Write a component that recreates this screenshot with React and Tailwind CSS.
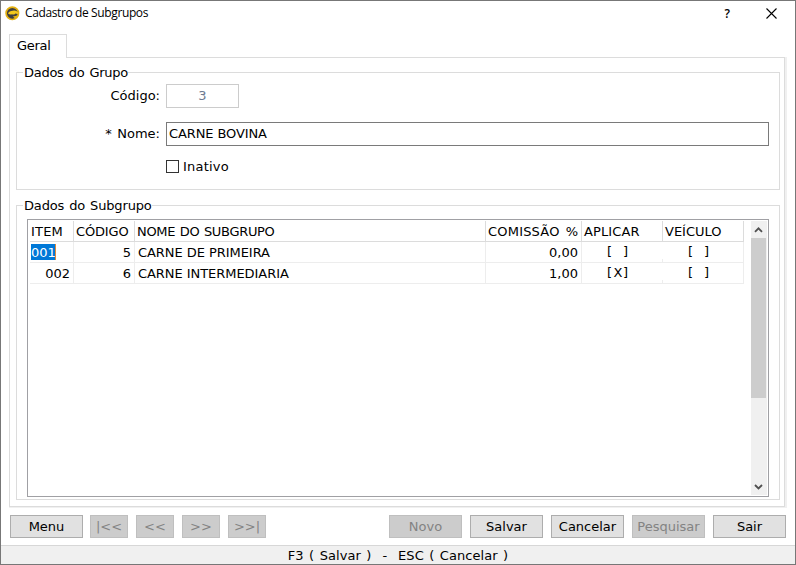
import React from "react";

function AppIcon() {
  return (
    <svg width="15" height="15" viewBox="0 0 15 15" className="shrink-0">
      <circle cx="7.3" cy="7.3" r="6.2" fill="#3f3f40" stroke="#e3b010" strokeWidth="1.7" />
      <path d="M3 7.6C3.8 5.6 6 4.6 8 4.8C10 4 12.4 5 13.6 7L12.6 8.1L10.4 7.4C9.4 8.5 8.2 9 7 8.3C5.6 8.8 4.2 8.5 3 7.6Z" fill="#f3c81c" />
      <path d="M8 10.2C10 10.6 12 9.8 13 8.6L12 11.6C10.6 12.6 9 12 8 10.2Z" fill="#e3b010" />
    </svg>
  );
}

function Group({ title, titleClass, className, children }) {
  return (
    <section className={`border border-[#dcdcdc] ${className}`}>
      <h2 className="-mt-[8px] ml-1.5 flex h-[15px]">
        <span className={`bg-white pl-px leading-4 ${titleClass}`}>{title}</span>
      </h2>
      {children}
    </section>
  );
}

function Button({ children, disabled, narrow }) {
  return (
    <button
      disabled={disabled}
      className={`flex h-[23px] shrink-0 items-center justify-center border ${narrow ? "w-[38px]" : "w-[73px]"} ${
        disabled ? "border-[#bfbfbf] bg-[#cccccc] text-[#838383]" : "border-[#adadad] bg-[#e1e1e1] text-black"
      }`}
    >
      {children}
    </button>
  );
}

const columns = "grid grid-cols-[44px_61px_351px_96px_81px_81px]";

function Row({ item, selected, code, name, commission, apply, vehicle }) {
  const cell = "border-r border-b border-[#ededed] h-[21px] leading-[22px] whitespace-pre";
  return (
    <div className={columns}>
      <div className={`${cell} ${selected ? "pl-px" : "pr-[3px] text-right"}`}>
        {selected ? (
          <span className="mt-[2px] flex h-4 w-[25px] items-center border-r border-[#e08a3a] bg-[#0078d7] pt-px tracking-[-0.05px] text-white">{item}</span>
        ) : (
          item
        )}
      </div>
      <div className={`${cell} pr-[3px] text-right`}>{code}</div>
      <div className={`${cell} pl-[3px] tracking-[-0.05px]`}>{name}</div>
      <div className={`${cell} pr-[3px] text-right`}>{commission}</div>
      <Mark value={apply} />
      <Mark value={vehicle} last />
    </div>
  );
}

function Mark({ value, last }) {
  return (
    <div className={`flex h-[21px] flex-col border-b border-[#ededed] ${last ? "border-r" : ""}`}>
      <div className="flex h-[17px] pl-[25px] leading-[19px]">
        <span className="w-[6px]">[</span>
        <span className="flex w-[10px] justify-center">{value}</span>
        <span>]</span>
      </div>
      {!last && <div className="h-[3px] border-r border-[#ededed]" />}
    </div>
  );
}

function Chevron({ up }) {
  return (
    <svg width="15" height="16" viewBox="0 0 15 16" className="block">
      <path d={up ? "M4 9.8L7.5 6.3L11 9.8" : "M4 6L7.5 9.5L11 6"} fill="none" stroke="#505050" strokeWidth="1.8" />
    </svg>
  );
}

export default function App() {
  return (
    <div className="flex h-[565px] w-[796px] flex-col overflow-hidden border border-[#777777] bg-white font-['DejaVu_Sans',Verdana,sans-serif] text-[13px] text-black">
      <header className="flex h-[33px] shrink-0 items-start pt-[5px] pl-1 font-['Open_Sans','Segoe_UI',sans-serif] text-xs">
        <AppIcon />
        <h1 className="-mt-[1px] ml-[5px] leading-4 tracking-[-0.38px]">Cadastro de Subgrupos</h1>
        <span className="mr-[36px] ml-auto font-semibold leading-[15px]">?</span>
        <svg width="11" height="11" viewBox="0 0 11 11" className="mt-[2px] mr-[18px]">
          <path d="M.5 .5L10.5 10.5M10.5 .5L.5 10.5" stroke="#000" strokeWidth="1.1" />
        </svg>
      </header>

      <div className="ml-2 flex h-[23px] shrink-0">
        <div className="z-10 h-6 w-[58px] border border-b-0 border-[#dcdcdc] bg-white pl-[7px] leading-[21px] tracking-[-0.3px]">Geral</div>
      </div>
      <main className="ml-2 h-[451px] w-[778px] shrink-0 border-r-2 border-b border-[#f0f0f0]">
        <div className="h-[450px] border border-[#dcdcdc] px-1.5 pt-[14px]">
          <Group title="Dados do Grupo" titleClass="tracking-[-0.27px] [word-spacing:1.2px]" className="h-[118px] w-[764px]">
            <div className="mt-[4px] flex h-6 items-center">
              <label className="w-[143px] text-right">Código:</label>
              <div className="ml-1.5 flex h-6 w-[73px] items-center justify-center border border-[#cccccc] text-[#6d7b91]">3</div>
            </div>
            <div className="mt-[14px] flex h-6 items-center">
              <label className="w-[143px] text-right [word-spacing:1.5px]">* Nome:</label>
              <div className="ml-1.5 flex h-6 w-[603px] items-center border border-[#7a7a7a] pl-[2px] tracking-[-0.1px]">CARNE BOVINA</div>
            </div>
            <label className="mt-3 ml-[149px] flex h-4 items-center">
              <span className="mr-1 h-[13px] w-[13px] border border-[#333333]" />
              <span className="pt-[2px] tracking-[0.2px]">Inativo</span>
            </label>
          </Group>
          <Group title="Dados do Subgrupo" titleClass="tracking-[-0.15px] [word-spacing:1px]" className="mt-[15px] h-[295px] w-[764px]">
            <div className="mt-[6px] ml-[10px] flex h-[278px] w-[742px] justify-between border border-[#a0a0a4] p-px">
              <div className="pl-px">
                <div className={`${columns} h-[21px] leading-[22px] whitespace-nowrap [&>div]:h-[21px] [&>div]:border-r [&>div]:border-b [&>div]:border-[#dcdcdc]`}>
                  <div className="pl-px tracking-[0.2px]">ITEM</div>
                  <div className="pl-[2px] tracking-[-0.15px]">CÓDIGO</div>
                  <div className="pl-[2px] tracking-[-0.32px] [word-spacing:0.8px]">NOME DO SUBGRUPO</div>
                  <div className="pl-[2px] tracking-[0.2px] [word-spacing:1.8px]">COMISSÃO %</div>
                  <div className="pl-[2px] tracking-[0.1px]">APLICAR</div>
                  <div className="pl-[2px]">VEÍCULO</div>
                </div>
                <Row item="001" selected code="5" name="CARNE DE PRIMEIRA" commission="0,00" vehicle="" />
                <Row item="002" code="6" name="CARNE INTERMEDIARIA" commission="1,00" apply="X" vehicle="" />
              </div>
              <div className="flex w-4 flex-col bg-[#f0f0f0] pt-px">
                <Chevron up />
                <div className="h-40 w-[15px] bg-[#cdcdcd]" />
                <div className="mt-auto"><Chevron /></div>
              </div>
            </div>
          </Group>
        </div>
      </main>

      <footer className="mt-[7px] flex h-[30px] shrink-0 gap-2 pr-[9px] pl-[9px]">
        <div className="-mr-px"><Button>Menu</Button></div>
        <Button disabled narrow>|&lt;&lt;</Button>
        <Button disabled narrow>&lt;&lt;</Button>
        <Button disabled narrow>&gt;&gt;</Button>
        <Button disabled narrow>&gt;&gt;|</Button>
        <div className="ml-auto flex gap-2">
          <Button disabled>Novo</Button>
          <Button>Salvar</Button>
          <Button>Cancelar</Button>
          <Button disabled>Pesquisar</Button>
          <Button>Sair</Button>
        </div>
      </footer>
      <div className="flex h-[19px] shrink-0 items-center justify-center border-t border-[#d7d7d7] bg-[#f0f0f0] pt-px whitespace-pre [word-spacing:1.3px] tracking-[0.05px]">F3 ( Salvar )  -  ESC ( Cancelar )</div>
    </div>
  );
}
